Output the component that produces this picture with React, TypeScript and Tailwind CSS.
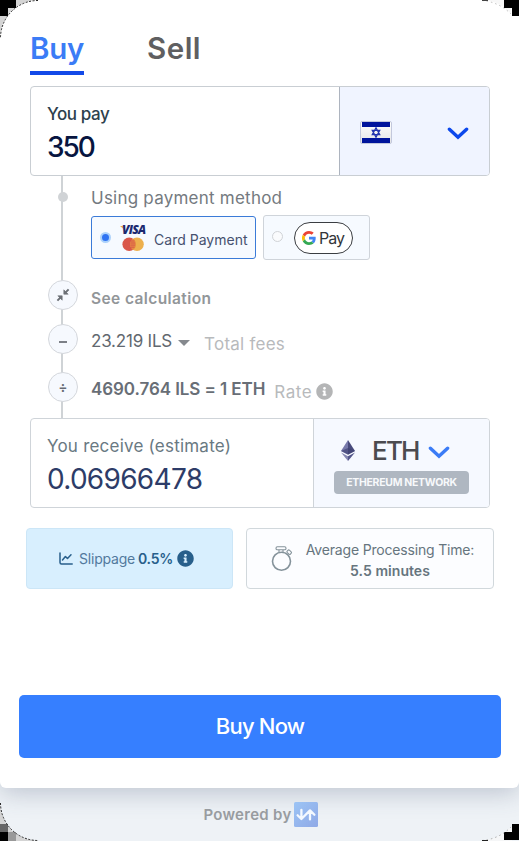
import React from "react";
import { FaInfoCircle } from "react-icons/fa";

function Chevron({ color }: { color: string }) {
  return (
    <svg width="22" height="14" viewBox="0 0 22 14" fill="none">
      <path d="M2.4 3.2 11 11.2 19.6 3.2" stroke={color} strokeWidth="3.4" strokeLinecap="round" />
    </svg>
  );
}

function Flag() {
  return (
    <svg width="32" height="23" viewBox="0 0 32 23">
      <defs>
        <linearGradient id="flagBase" x1="0" y1="0" x2="0" y2="1">
          <stop offset="0" stopColor="#ffffff" />
          <stop offset="1" stopColor="#e4e4e6" />
        </linearGradient>
      </defs>
      <rect x="0.5" y="0.5" width="31" height="22" rx="1.5" fill="url(#flagBase)" stroke="#c3c8dc" />
      <rect x="2" y="1" width="28" height="5" fill="#00149c" />
      <rect x="2" y="17" width="28" height="5" fill="#00149c" />
      <path d="M16 6.8 19.7 13.6H12.3ZM16 16.2 12.3 9.4H19.7Z" fill="none" stroke="#2436b0" strokeWidth="1.3" />
    </svg>
  );
}

function CardBrands() {
  return (
    <div className="relative flex h-[28px] w-[26px] items-end">
      <svg className="absolute left-0 top-[2px]" width="8" height="7" viewBox="0 0 8 7">
        <path d="M0 0H4.2L5.4 4.6Z" fill="#e8ad45" />
      </svg>
      <span className="absolute left-[2px] top-0 font-['Open_Sans',sans-serif] text-[12px] font-extrabold italic leading-[12px] tracking-[-0.7px] text-[#1c2a70]">VISA</span>
      <svg width="26" height="15" viewBox="0 0 26 15">
        <circle cx="9.2" cy="7.3" r="6.8" fill="#d9574a" />
        <circle cx="17" cy="7.3" r="6.8" fill="#edb04d" />
        <path d="M13.1 1.7a6.8 6.8 0 0 1 0 11.2a6.8 6.8 0 0 1 0-11.2Z" fill="#e58a43" />
        <path d="M10.6 4H14.5M10.3 6H15M10.3 8.1H15M10.6 10.2H14.5" stroke="#d9574a" strokeWidth="1" />
      </svg>
    </div>
  );
}

function GoogleG() {
  return (
    <svg width="14" height="14" viewBox="0 0 48 48">
      <path fill="#ea4335" d="M24 9.5c3.54 0 6.71 1.22 9.21 3.6l6.85-6.85C35.9 2.38 30.47 0 24 0 14.62 0 6.51 5.38 2.56 13.22l7.98 6.19C12.43 13.72 17.74 9.5 24 9.5z" />
      <path fill="#4285f4" d="M46.98 24.55c0-1.57-.15-3.09-.38-4.55H24v9.02h12.94c-.58 2.96-2.26 5.48-4.78 7.18l7.73 6c4.51-4.18 7.09-10.36 7.09-17.65z" />
      <path fill="#fbbc05" d="M10.53 28.59a14.5 14.5 0 0 1 0-9.18l-7.98-6.19a24 24 0 0 0 0 21.56z" />
      <path fill="#34a853" d="M24 48c6.48 0 11.93-2.13 15.89-5.81l-7.73-6c-2.15 1.45-4.92 2.3-8.16 2.3-6.26 0-11.57-4.22-13.47-9.91l-7.98 6.19C6.51 42.62 14.62 48 24 48z" />
    </svg>
  );
}

function Collapse() {
  return (
    <svg width="14" height="14" viewBox="0 0 14 14" fill="#6c7076" stroke="#6c7076">
      <path d="M1.4 12.6 4.6 9.4M12.6 1.4 9.4 4.6" strokeWidth="2" />
      <path d="M1.8 7.8H6.2V12.2ZM12.2 6.2H7.8V1.8Z" strokeWidth="0.6" />
    </svg>
  );
}

function Ether() {
  return (
    <svg width="14" height="21" viewBox="0 0 14 21">
      <path d="M7 0 0 11 7 14.5Z" fill="#7779ab" />
      <path d="M7 0 14 11 7 14.5Z" fill="#484b7c" />
      <path d="M7 8 0 11 7 14.8 14 11Z" fill="#3d4072" opacity=".65" />
      <path d="M0 12.6 7 16.3V21Z" fill="#8486b1" />
      <path d="M14 12.6 7 16.3V21Z" fill="#52558a" />
    </svg>
  );
}

function ChartIcon() {
  return (
    <svg width="14" height="13" viewBox="0 0 14 13" fill="none" stroke="#285f8b" strokeWidth="1.5" strokeLinecap="round" strokeLinejoin="round">
      <path d="M1 1V10.5Q1 12 2.5 12H13.2" />
      <path d="M3.5 8 6.4 4.6 8.5 6.4 12 2.8" />
    </svg>
  );
}

function Stopwatch() {
  return (
    <svg width="22" height="26" viewBox="0 0 22 26" fill="none" stroke="#84929a">
      <circle cx="10.5" cy="15.2" r="9" strokeWidth="1.6" />
      <rect x="5" y="0.8" width="10" height="3" rx="1.4" strokeWidth="1.1" />
      <path d="M8 4V6.3M12 4V6.3" strokeWidth="1.1" />
      <rect x="16" y="4.6" width="4.4" height="3.2" rx="1" transform="rotate(42 18.2 6.2)" strokeWidth="1.1" />
    </svg>
  );
}

function BrandMark() {
  return (
    <svg width="24" height="25" viewBox="0 0 24 25">
      <defs>
        <linearGradient id="brand" x1="0" y1="0" x2="1" y2="1">
          <stop offset="0" stopColor="#9cc4f5" />
          <stop offset="1" stopColor="#8fa9e6" />
        </linearGradient>
      </defs>
      <rect width="24" height="25" rx="1.5" fill="url(#brand)" />
      <path d="M7.4 7.8V17M3.6 13.2 7.4 17 16 8.4 20.4 12.8M16 8.4V17.4" fill="none" stroke="#f4f9ff" strokeWidth="2.3" strokeLinecap="round" strokeLinejoin="round" />
    </svg>
  );
}

function Corners() {
  return (
    <svg className="pointer-events-none absolute inset-0" width="519" height="841" viewBox="0 0 519 841" fill="none">
      <path d="M0 0H38A38 38 0 0 0 0 38Z" fill="#d4d4d4" />
      <path d="M0 0H16V8H8V16H0Z" fill="#000" />
      <path d="M38 .5A37.5 37.5 0 0 0 .5 38" stroke="#222" strokeDasharray="2 1.5" />
      <path d="M481 0H511V14A38 38 0 0 0 481 0Z" fill="#f7f7f7" />
      <path d="M504 0H519V16H512V8H504Z" fill="#000" />
      <path d="M482 .5Q499 2 511 14" stroke="#bbb" strokeDasharray="1.5 3" />
      <path d="M482 .5H488" stroke="#444" />
      <path d="M0 803A38 38 0 0 0 38 841H0Z" fill="#d4d4d4" />
      <path d="M0 824H8V832H0Z" fill="#666" />
      <path d="M8 832H16V841H8Z" fill="#999" />
      <path d="M0 832H8V841H0Z" fill="#000" />
      <path d="M.5 803A37.5 37.5 0 0 0 38 840.5" stroke="#222" strokeDasharray="2 1.5" />
      <path d="M511 827Q499 839 481 841H512V827Z" fill="#f5f6f7" />
      <path d="M504 832H512V824H519V840H504Z" fill="#000" />
      <path d="M482 840.5Q499 839 511 827" stroke="#aaa" strokeDasharray="1.5 3" />
      <path d="M482 840.5H488" stroke="#222" />
    </svg>
  );
}

function Node({ children }: { children: React.ReactNode }) {
  return (
    <div className="z-10 flex size-[30px] shrink-0 items-center justify-center rounded-full border border-[#d4d7dc] bg-[#f6f9fe] text-[13px] font-bold leading-none text-[#666b73]">
      {children}
    </div>
  );
}

export default function App() {
  return (
    <div className="relative flex h-[841px] w-[519px] flex-col overflow-hidden bg-[#eef2f6] font-['Inter','Liberation_Sans',sans-serif]">
      <main className="flex h-[788px] flex-col rounded-b-[6px] bg-white shadow-[0_5px_24px_rgba(65,80,110,0.28)]">
        <nav className="flex h-[86px] shrink-0 items-start gap-[63px] pl-[30px] pt-[27px] text-[29.5px] font-semibold leading-[43px]">
          <div className="h-[48px] w-[54px] whitespace-nowrap border-b-[4px] border-[#1249e8] tracking-[-0.3px] text-[#3b7cf6]">Buy</div>
          <div className="whitespace-nowrap tracking-[0.5px] text-[#5f5f61]">Sell</div>
        </nav>

        <section className="mx-[30px] mr-[29px] flex h-[90px] shrink-0 overflow-hidden rounded-[4px] border-[1.5px] border-[#c9ced3]">
          <div className="flex w-[309px] flex-col border-r border-[#adb4bf] pl-4 pt-[16px]">
            <span className="text-[17px] font-medium leading-[22px] tracking-[-0.4px] text-[#2d414d]">You pay</span>
            <span className="text-[28px] font-medium leading-[44px] tracking-[-2px] text-[#071540]">350</span>
          </div>
          <div className="flex flex-1 items-center justify-between bg-[#f0f4ff] pl-5 pr-[20px] pt-[3px]">
            <Flag />
            <Chevron color="#0c48ec" />
          </div>
        </section>

        <section className="relative flex h-[242px] shrink-0 flex-col pl-[48px]">
          <div className="absolute left-[61px] top-0 h-full w-[2px] bg-[#cfd3d6]" />
          <div className="flex h-[39px] items-center gap-[23px] pl-[10px] pt-[4px]">
            <span className="z-10 mb-[2px] size-[10px] rounded-full bg-[#d0d3d6]" />
            <span className="whitespace-nowrap text-[17px] leading-6 tracking-[0.23px] text-[#747a80]">Using payment method</span>
          </div>
          <div className="flex h-[45px] items-center gap-[7px] pl-[43px]">
            <div className="flex h-[43px] w-[165px] items-center rounded-[3px] border border-[#3b7bd8] bg-[#f6faff] pl-[8px]">
              <span className="size-[11px] shrink-0 rounded-full border-[2px] border-[#acd2fb] bg-[#2f73f2]" />
              <span className="ml-[9px]"><CardBrands /></span>
              <span className="ml-[8px] whitespace-nowrap pt-[4px] text-[14px] tracking-[0.02px] text-[#46516f]">Card Payment</span>
            </div>
            <div className="flex h-[45px] w-[107px] items-center rounded-[3px] border border-[#cfd4da] bg-[#f6faff] pl-[8px]">
              <span className="mb-[2px] size-[11px] shrink-0 rounded-full border border-[#d0d3d7] bg-[#fafbfd]" />
              <span className="ml-[11px] flex h-[32px] w-[59px] items-center gap-[3px] rounded-full border-[1.5px] border-[#3b3e42] bg-white pl-[7px]">
                <GoogleG />
                <span className="text-[16px] leading-5 tracking-[-1px] text-[#33363a]">Pay</span>
              </span>
            </div>
          </div>
          <div className="mt-[20px] flex h-[30px] items-center gap-[13px]">
            <Node><Collapse /></Node>
            <span className="whitespace-nowrap pt-[7px] text-[15.5px] font-semibold tracking-[0.4px] text-[#929699]">See calculation</span>
          </div>
          <div className="mt-[14px] flex h-[30px] items-center">
            <Node><span className="mt-[5px] h-[2px] w-2 bg-[#7c8087]" /></Node>
            <span className="ml-[13px] whitespace-nowrap pt-[6px] text-[17px] tracking-[-0.2px] text-[#62686f]">23.219 ILS</span>
            <span className="ml-[6px] mt-[8px] border-x-[6px] border-t-[6px] border-x-transparent border-t-[#85898e]" />
            <span className="ml-[14px] whitespace-nowrap pt-[12px] text-[17px] tracking-[0.25px] text-[#b8babc]">Total fees</span>
          </div>
          <div className="mt-[18px] flex h-[30px] items-center">
            <Node>÷</Node>
            <span className="ml-[13px] whitespace-nowrap pt-[5px] text-[17px] font-semibold tracking-[-0.08px] text-[#686e76]">4690.764 ILS = 1 ETH</span>
            <span className="ml-[9px] whitespace-nowrap pt-[11px] text-[17px] tracking-[0.5px] text-[#b8babc]">Rate</span>
            <FaInfoCircle className="ml-[4px] mt-[9px] size-[17px] text-[#b4b5b6]" />
          </div>
        </section>

        <section className="mx-[30px] mr-[29px] flex h-[90px] shrink-0 overflow-hidden rounded-[4px] border border-[#cfd4d9]">
          <div className="flex w-[283px] flex-col border-r border-[#cfd4d9] pl-4 pt-[16px]">
            <span className="whitespace-nowrap text-[17px] leading-[22px] tracking-[0.22px] text-[#697982]">You receive (estimate)</span>
            <span className="text-[28px] leading-[44px] tracking-[-0.7px] text-[#2d3c68]">0.06966478</span>
          </div>
          <div className="flex flex-1 flex-col items-center bg-[#f6f9ff] pt-[15px]">
            <div className="flex h-[32px] w-full items-center pl-[27px]">
              <Ether />
              <span className="ml-[17px] mr-[8px] w-[48px] whitespace-nowrap text-[26px] font-medium tracking-[-1.8px] text-[#4b4b4f]">ETH</span>
              <span className="pt-1"><Chevron color="#3b7cf6" /></span>
            </div>
            <div className="mt-[5px] flex h-[23px] w-[135px] items-center justify-center rounded-[4px] bg-[#afb7c1] text-[10.5px] font-bold tracking-[-0.3px] text-[#f7f9fb]">ETHEREUM NETWORK</div>
          </div>
        </section>

        <section className="mt-[20px] flex h-[61px] shrink-0 gap-[13px] pl-[26px]">
          <div className="flex w-[207px] items-center rounded-[4px] border border-[#cce6f7] bg-[#d8effe] pl-[32px] text-[14px] text-[#285f8b]">
            <ChartIcon />
            <span className="ml-[6px] whitespace-nowrap tracking-[-0.2px] text-[#52799d]">Slippage</span>
            <span className="ml-[3px] font-semibold tracking-[-0.3px]">0.5%</span>
            <FaInfoCircle className="ml-[4px] size-[17px]" />
          </div>
          <div className="flex w-[248px] items-center rounded-[4px] border border-[#d1d8dc] bg-[#fcfdff] pl-[24px]">
            <Stopwatch />
            <div className="ml-[12px] flex w-[170px] flex-col items-center whitespace-nowrap pt-[2px] text-[14px] leading-[21px] tracking-[-0.18px] text-[#66757e]">
              <span>Average Processing Time:</span>
              <span className="font-semibold tracking-[0.05px]">5.5 minutes</span>
            </div>
          </div>
        </section>

        <button className="mx-[19px] mr-[18px] mt-[106px] flex h-[63px] shrink-0 items-center justify-center rounded-[5px] bg-[#367fff] text-[22px] font-medium tracking-[-0.8px] text-white">Buy Now</button>
      </main>
      <footer className="flex flex-1 items-center justify-center gap-[2px] pl-[2px] text-[#989ca0]">
        <span className="pt-[1px] text-[15px] font-semibold tracking-[0.3px]">Powered by</span>
        <BrandMark />
      </footer>
      <Corners />
    </div>
  );
}
